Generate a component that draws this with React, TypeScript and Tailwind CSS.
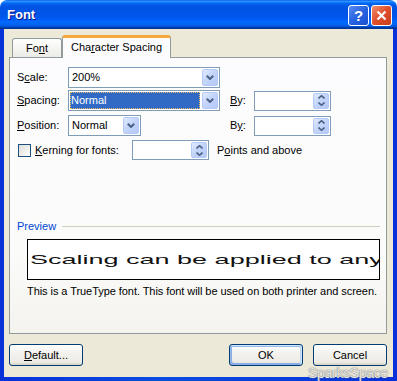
import React from 'react'

const Chevron = ({ up = false, small = false }: { up?: boolean; small?: boolean }) => (
  <svg width={small ? 7 : 8} height={small ? 4 : 5} viewBox={small ? '0 0 7 4' : '0 0 8 5'} className="block">
    {small ? (
      <polyline
        points={up ? '0.5,3.5 3.5,0.7 6.5,3.5' : '0.5,0.5 3.5,3.3 6.5,0.5'}
        fill="none"
        stroke="#4d6185"
        strokeWidth="1.6"
      />
    ) : (
      <polyline points="0.8,0.8 4,4 7.2,0.8" fill="none" stroke="#4d6185" strokeWidth="2" />
    )}
  </svg>
)

const DropButton = () => (
  <div className="w-[16px] h-full flex items-center justify-center rounded-[2px] border border-[#b5c9f6] bg-[linear-gradient(135deg,#e2ebfe,#c4d5fb_45%,#b4c9f7)]">
    <Chevron />
  </div>
)

const SpinButton = () => (
  <div className="w-[16px] h-full flex flex-col rounded-[2px] border border-[#b5c9f6] bg-[linear-gradient(135deg,#e2ebfe,#c4d5fb_45%,#b4c9f7)]">
    <div className="flex-1 flex items-center justify-center">
      <Chevron up small />
    </div>
    <div className="flex-1 flex items-center justify-center">
      <Chevron small />
    </div>
  </div>
)

const SpinInput = ({ width }: { width: string }) => (
  <div className={`${width} h-[20px] flex justify-end border border-[#7f9db9] bg-white p-[1px]`}>
    <SpinButton />
  </div>
)

const XPButton = ({ children, isDefault = false }: { children: React.ReactNode; isDefault?: boolean }) => (
  <div
    className={`w-[74px] h-[22px] flex items-center justify-center rounded-[3px] border border-[#003c74] bg-[linear-gradient(180deg,#ffffff,#f3f2ee_40%,#ecebe6_85%,#d6d0c5)] text-[11px] text-black ${
      isDefault
        ? 'shadow-[inset_-1px_1px_#cee7ff,inset_1px_2px_#98b8ea,inset_-2px_2px_#bcd4f6,inset_1px_-1px_#89ade4,inset_2px_-2px_#89ade4]'
        : ''
    }`}
  >
    {children}
  </div>
)

export default function App() {
  return (
    <div className="relative w-[397px] h-[381px] flex flex-col bg-white overflow-hidden font-['Liberation_Sans',Arial,sans-serif] text-[11px] text-black">
      {/* Title bar */}
      <div className="h-[29px] flex items-center rounded-t-[7px] pl-[7px] pr-[5px] bg-[linear-gradient(180deg,#0058ee_0%,#3593ff_4%,#288eff_6%,#127dff_8%,#036ffc_10%,#0262ee_14%,#0057e5_20%,#0054e3_24%,#0055eb_56%,#005bf5_66%,#026afe_76%,#0062ef_86%,#0052d6_92%,#0040ab_94%,#003092_100%)]">
        <span className="text-white font-bold text-[13px] [text-shadow:1px_1px_#0f1089]">Font</span>
        <div className="ml-auto flex gap-[2px] pt-[1px]">
          <div className="w-[21px] h-[21px] flex items-center justify-center rounded-[3px] border border-white bg-[linear-gradient(135deg,#5a8cf5,#2663e0_50%,#1a52d0)] text-white font-bold text-[15px] leading-none">
            ?
          </div>
          <div className="w-[21px] h-[21px] flex items-center justify-center rounded-[3px] border border-white bg-[linear-gradient(135deg,#f0906e,#e04d2a_50%,#c83e1c)]">
            <svg width="11" height="11" viewBox="0 0 11 11">
              <path d="M1.5 1.5 L9.5 9.5 M9.5 1.5 L1.5 9.5" stroke="white" strokeWidth="2.2" />
            </svg>
          </div>
        </div>
      </div>

      {/* Window frame + client */}
      <div className="flex-1 flex flex-col px-[4px] pb-[4px] bg-[linear-gradient(90deg,#0831d9,#0a4ce0_40%,#0831d9)]">
        <div className="flex-1 flex flex-col bg-[#ece9d8] pl-[5px] pr-[6px]">
          {/* Tabs */}
          <div className="mt-[6px] h-[22px] flex items-end pl-[3px]">
            <div className="w-[50px] h-[19px] flex items-center justify-center rounded-t-[3px] border-t border-x border-[#919b9c] bg-[linear-gradient(180deg,#ffffff,#f3f3ef_60%,#ecebe6)]">
              Fo<span className="underline underline-offset-1">n</span>t
            </div>
            <div className="relative z-10 -mb-px w-[109px] h-[23px] flex items-center justify-center rounded-t-[3px] border-x border-[#919b9c] border-t-[3px] border-t-[#f5a93a] bg-[#fcfcfe] pb-[1px]">
              Cha<span className="underline underline-offset-1">r</span>acter Spacing
            </div>
          </div>

          {/* Panel */}
          <div className="h-[277px] flex flex-col border border-[#919b9c] bg-[linear-gradient(180deg,#fcfcfe,#fbfbfa_70%,#f4f3ee)] pl-[7px] pr-[6px]">
            {/* Scale */}
            <div className="mt-[9px] h-[21px] flex items-center">
              <div className="w-[51px]">
                S<span className="underline underline-offset-1">c</span>ale:
              </div>
              <div className="w-[152px] h-full flex items-center border border-[#7f9db9] bg-white p-[1px]">
                <span className="flex-1 pl-[2px]">200%</span>
                <DropButton />
              </div>
            </div>

            {/* Spacing */}
            <div className="mt-[2px] h-[21px] flex items-center">
              <div className="w-[51px]">
                <span className="underline underline-offset-1">S</span>pacing:
              </div>
              <div className="w-[152px] h-full flex items-center border border-[#7f9db9] bg-white p-[1px]">
                <div className="flex-1 h-full mr-[2px] flex items-center bg-[#316ac5] text-white outline-1 outline-dotted outline-[#f0c060] -outline-offset-1">
                  <span className="pl-[1px]">Normal</span>
                </div>
                <DropButton />
              </div>
              <div className="ml-[10px] w-[24px]">
                <span className="underline underline-offset-1">B</span>y:
              </div>
              <SpinInput width="w-[77px]" />
            </div>

            {/* Position */}
            <div className="mt-[4px] h-[21px] flex items-center">
              <div className="w-[51px]">
                <span className="underline underline-offset-1">P</span>osition:
              </div>
              <div className="w-[73px] h-full flex items-center border border-[#7f9db9] bg-white p-[1px]">
                <span className="flex-1 pl-[2px]">Normal</span>
                <DropButton />
              </div>
              <div className="ml-[89px] w-[24px]">
                B<span className="underline underline-offset-1">y</span>:
              </div>
              <SpinInput width="w-[77px]" />
            </div>

            {/* Kerning */}
            <div className="mt-[4px] h-[20px] flex items-center">
              <div className="ml-[1px] w-[13px] h-[13px] border border-[#1c5180] bg-[linear-gradient(135deg,#dcdcd7,#ffffff)]" />
              <div className="ml-[4px] w-[97px]">
                <span className="underline underline-offset-1">K</span>erning for fonts:
              </div>
              <SpinInput width="w-[77px]" />
              <div className="ml-[8px]">
                P<span className="underline underline-offset-1">o</span>ints and above
              </div>
            </div>

            {/* Preview */}
            <div className="mt-[60px] h-[13px] flex items-center">
              <span className="text-[#0046d5]">Preview</span>
              <div className="flex-1 h-px ml-[6px] bg-[#d0d0bf]" />
            </div>
            <div className="ml-[10px] mt-[6px] h-[41px] flex items-center border border-black bg-white overflow-hidden pl-[2px] pt-[1px]">
              <span className="inline-block origin-left scale-x-200 whitespace-nowrap text-[13.5px] text-[#111]">
                Scaling can be applied to any
              </span>
            </div>
            <div className="ml-[10px] mt-[5px] leading-[13px] whitespace-nowrap tracking-[-0.06px]">
              This is a TrueType font. This font will be used on both printer and screen.
            </div>
          </div>

          {/* Buttons */}
          <div className="mt-[10px] flex">
            <XPButton>
              <span>
                <span className="underline underline-offset-1">D</span>efault...
              </span>
            </XPButton>
            <div className="ml-auto flex gap-[10px]">
              <XPButton isDefault>OK</XPButton>
              <XPButton>Cancel</XPButton>
            </div>
          </div>
        </div>
      </div>

      <span className="absolute right-[9px] bottom-[-3px] text-[14px] tracking-[-0.3px] text-[#e6e6e6] [text-shadow:0_0_1px_#7a7a7a,0_0_1px_#7a7a7a]">
        SparksSpace
      </span>
    </div>
  )
}
